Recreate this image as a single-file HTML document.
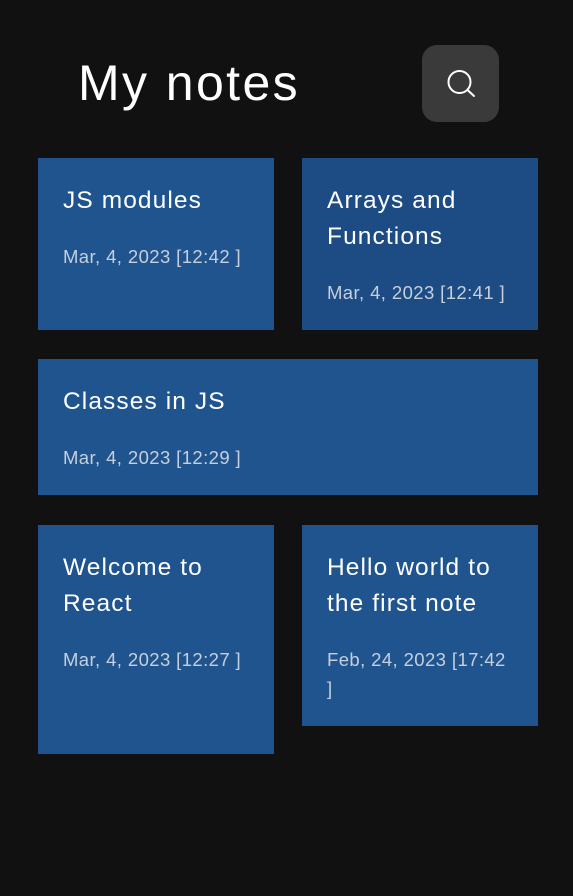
<!DOCTYPE html>
<html><head><meta charset="utf-8"><style>
body{margin:0;width:573px;height:896px;background:#111111;font-family:"Liberation Sans",sans-serif;position:relative;overflow:hidden}
h1{position:absolute;left:78px;top:53px;margin:0;font-size:50px;font-weight:400;color:#fff;line-height:60px;letter-spacing:2.4px}
.btn{position:absolute;left:422px;top:45px;width:77px;height:77px;border-radius:15px;background:#3a3a3a}
.c{position:absolute;background:#1f548f;box-sizing:border-box;padding:25px 10px 0 25px;color:#fff;white-space:nowrap}
.t{font-size:24.5px;line-height:36px;letter-spacing:1.1px}
.d{font-size:18.5px;line-height:29px;color:#c6cfdc;margin-top:23px;letter-spacing:0.4px}
</style></head><body>
<h1>My notes</h1>
<div class="btn"><svg width="77" height="77" viewBox="0 0 77 77"><circle cx="37.5" cy="37" r="11" fill="none" stroke="#fff" stroke-width="2"/><line x1="45.5" y1="45" x2="52" y2="51" stroke="#fff" stroke-width="2" stroke-linecap="round"/></svg></div>
<div class="c" style="left:38px;top:158px;width:236px;height:172px"><div class="t">JS modules</div><div class="d">Mar, 4, 2023 [12:42 ]</div></div>
<div class="c" style="left:302px;top:158px;width:236px;height:172px;background:#1d4b83"><div class="t">Arrays and<br>Functions</div><div class="d">Mar, 4, 2023 [12:41 ]</div></div>
<div class="c" style="left:38px;top:359px;width:500px;height:136px"><div class="t">Classes in JS</div><div class="d">Mar, 4, 2023 [12:29 ]</div></div>
<div class="c" style="left:38px;top:525px;width:236px;height:229px"><div class="t">Welcome to<br>React</div><div class="d">Mar, 4, 2023 [12:27 ]</div></div>
<div class="c" style="left:302px;top:525px;width:236px;height:201px"><div class="t">Hello world to<br>the first note</div><div class="d">Feb, 24, 2023 [17:42<br>]</div></div>
</body></html>
